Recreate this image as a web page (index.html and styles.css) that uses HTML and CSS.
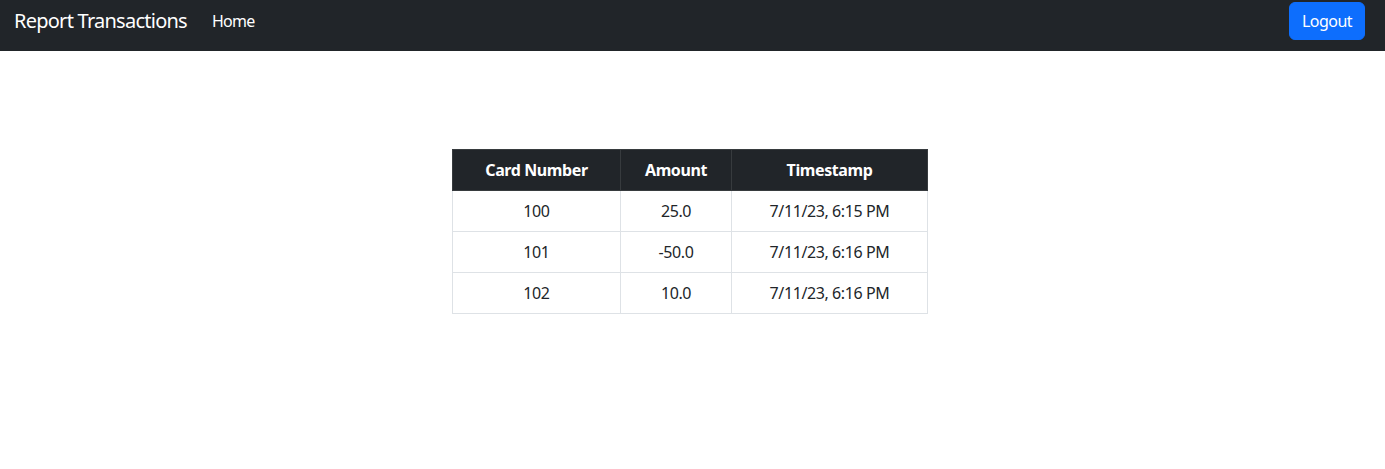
FILE: index.html
```html
<!DOCTYPE html>
<html lang="en">
<head>
<meta charset="utf-8">
<title>Report Transactions</title>
<link rel="stylesheet" href="styles.css">
</head>
<body>
<nav class="navbar">
  <div class="nav-left">
    <a class="brand" href="#">Report Transactions</a>
    <a class="nav-link" href="#">Home</a>
  </div>
  <button class="btn-logout" type="button">Logout</button>
</nav>
<main class="content">
  <table class="tx-table">
    <thead>
      <tr>
        <th class="col-card">Card Number</th>
        <th class="col-amount">Amount</th>
        <th class="col-time">Timestamp</th>
      </tr>
    </thead>
    <tbody>
      <tr><td>100</td><td>25.0</td><td>7/11/23, 6:15 PM</td></tr>
      <tr><td>101</td><td>-50.0</td><td>7/11/23, 6:16 PM</td></tr>
      <tr><td>102</td><td>10.0</td><td>7/11/23, 6:16 PM</td></tr>
    </tbody>
  </table>
</main>
</body>
</html>
```
FILE: styles.css
```css
* { box-sizing: border-box; }
body {
  margin: 0;
  font-family: "Noto Sans", "Open Sans", sans-serif;
  font-size: 16px;
  line-height: 1.5;
  color: #212529;
  background: #fff;
  letter-spacing: -0.4px;
}
.navbar {
  background: #212529;
  height: 51px;
  display: flex;
  justify-content: space-between;
  align-items: flex-start;
  padding: 2px 20px 0 14px;
}
.nav-left {
  display: flex;
  align-items: center;
  height: 38px;
}
.brand {
  color: #fff;
  text-decoration: none;
  font-size: 20px;
  line-height: 30px;
  margin-right: 25px;
  letter-spacing: -0.75px;
}
.nav-link {
  color: #fff;
  text-decoration: none;
  font-size: 16px;
  line-height: 24px;
  letter-spacing: -0.7px;
}
.btn-logout {
  font-family: inherit;
  font-size: 16px;
  line-height: 24px;
  letter-spacing: -0.5px;
  padding: 6px 8px;
  border: 1px solid #0d6efd;
  background: #0d6efd;
  color: #fff;
  border-radius: 6px;
  height: 38px;
  width: 76px;
}
.content {
  display: flex;
  justify-content: center;
  padding-top: 98px;
  padding-right: 5px;
}
.tx-table {
  border-collapse: collapse;
  text-align: center;
}
.tx-table th, .tx-table td {
  padding: 8px;
  height: 41px;
}
.tx-table th {
  background: #212529;
  color: #fff;
  font-weight: 700;
  border: 1px solid #373b3e;
}
.tx-table td {
  border: 1px solid #dee2e6;
}
.col-card { width: 168px; }
.col-amount { width: 111px; }
.col-time { width: 196px; }
```
